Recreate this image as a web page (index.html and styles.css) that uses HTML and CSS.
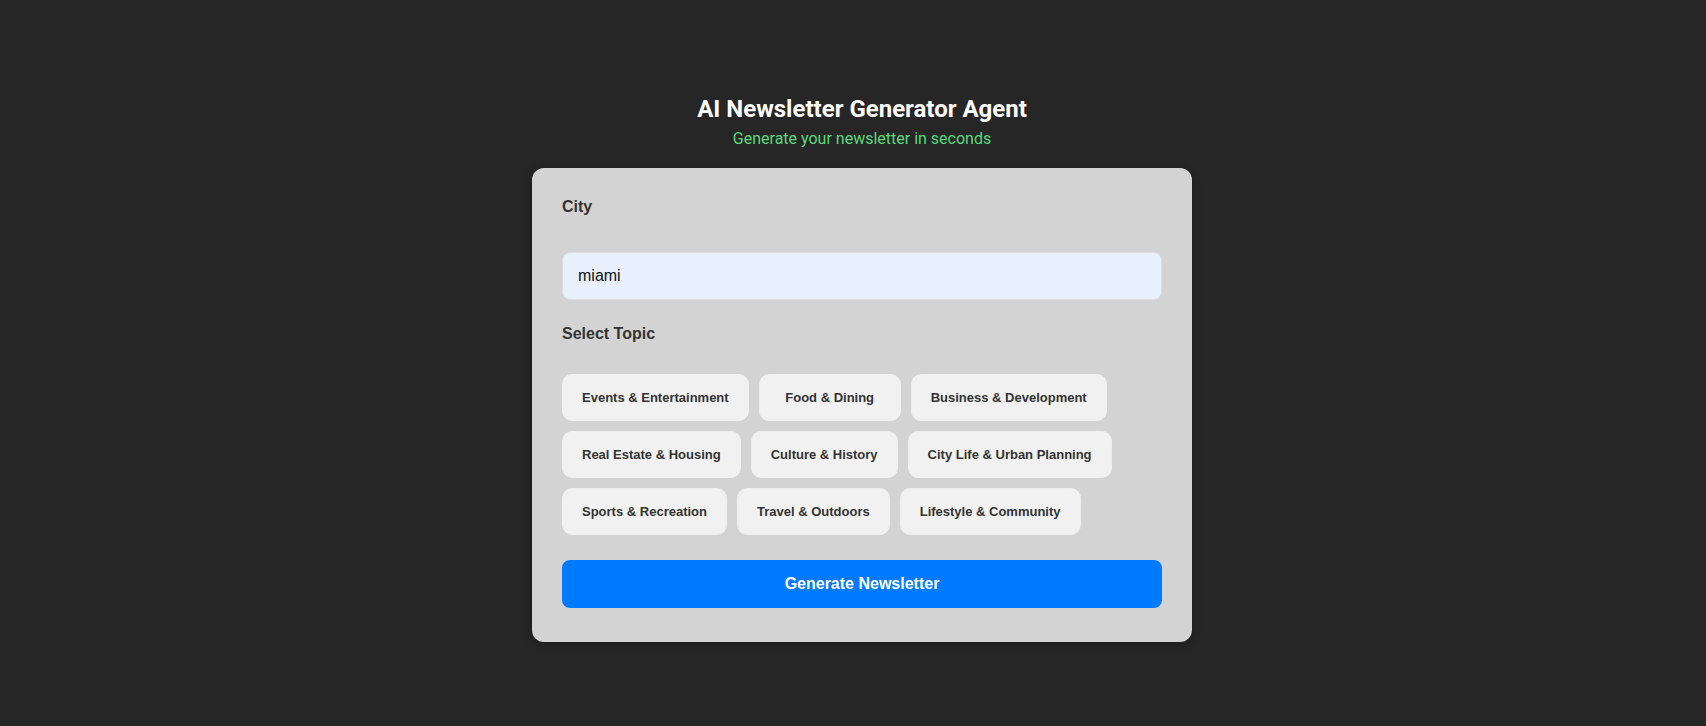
FILE: index.html
```html
<!DOCTYPE html>
<html lang="en">
<head>
<meta charset="utf-8">
<title>AI Newsletter Generator Agent</title>
<link rel="stylesheet" href="styles.css">
</head>
<body>
<main class="page">
  <header class="hero">
    <h1 class="hero-title">AI Newsletter Generator Agent</h1>
    <p class="hero-sub">Generate your newsletter in seconds</p>
  </header>
  <form class="card">
    <label class="field-label" for="city">City</label>
    <input class="city-input" id="city" type="text" value="miami">
    <div class="field-label topic-label">Select Topic</div>
    <div class="chips">
      <button type="button" class="chip">Events &amp; Entertainment</button>
      <button type="button" class="chip">Food &amp; Dining</button>
      <button type="button" class="chip">Business &amp; Development</button>
      <button type="button" class="chip">Real Estate &amp; Housing</button>
      <button type="button" class="chip">Culture &amp; History</button>
      <button type="button" class="chip">City Life &amp; Urban Planning</button>
      <button type="button" class="chip">Sports &amp; Recreation</button>
      <button type="button" class="chip">Travel &amp; Outdoors</button>
      <button type="button" class="chip">Lifestyle &amp; Community</button>
    </div>
    <button type="button" class="generate">Generate Newsletter</button>
  </form>
</main>
</body>
</html>
```
FILE: styles.css
```css
* { box-sizing: border-box; }

html, body {
  margin: 0;
  padding: 0;
  background: #262626;
  height: 100%;
}

body {
  font-family: "Liberation Sans", Arial, sans-serif;
}

.page {
  display: flex;
  flex-direction: column;
  align-items: center;
  padding: 95px 0 0 18px;
}

.hero {
  text-align: center;
  font-family: Roboto, "Liberation Sans", sans-serif;
}

.hero-title {
  margin: 0;
  font-size: 24px;
  font-weight: 700;
  line-height: 28px;
  color: #ffffff;
}

.hero-sub {
  margin: 6px 0 0;
  font-size: 16px;
  line-height: 19px;
  color: #5bd97c;
}

.card {
  margin-top: 20px;
  width: 660px;
  padding: 30px 30px 34px;
  background: #d3d3d3;
  border-radius: 12px;
  box-shadow: 0 2px 8px rgba(0, 0, 0, 0.25);
  display: flex;
  flex-direction: column;
}

.field-label {
  display: block;
  font-size: 16px;
  font-weight: 700;
  line-height: 18px;
  color: #333333;
}

.city-input {
  margin-top: 36px;
  height: 48px;
  width: 100%;
  padding: 0 15px;
  border: 1px solid #dcdcdc;
  border-radius: 8px;
  background: #e8f0fe;
  font-family: "Liberation Sans", Arial, sans-serif;
  font-size: 16px;
  color: #111111;
  outline: none;
}

.topic-label {
  margin-top: 25px;
}

.chips {
  margin-top: 31px;
  display: flex;
  flex-wrap: wrap;
  gap: 10px;
}

.chip {
  height: 47px;
  min-width: 142px;
  padding: 0 19px;
  border: 1px solid #efefef;
  border-radius: 10px;
  background: #f1f1f1;
  font-family: "Liberation Sans", Arial, sans-serif;
  font-size: 13px;
  font-weight: 700;
  color: #333333;
  cursor: pointer;
}

.generate {
  margin-top: 25px;
  height: 48px;
  width: 100%;
  border: none;
  border-radius: 8px;
  background: #007bff;
  color: #ffffff;
  font-family: "Liberation Sans", Arial, sans-serif;
  font-size: 16px;
  font-weight: 700;
  cursor: pointer;
}
```
